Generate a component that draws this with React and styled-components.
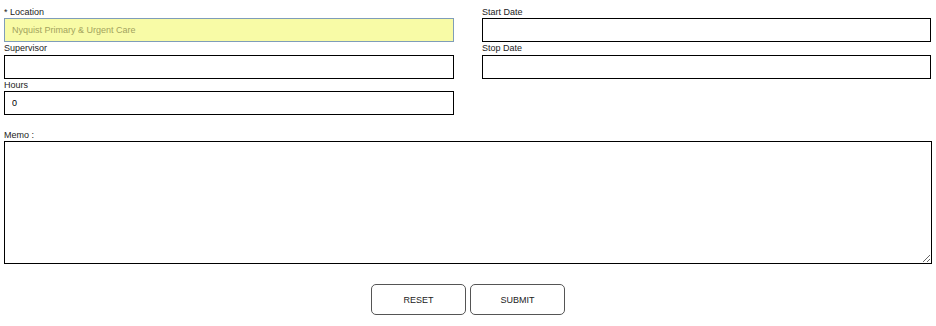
import React from 'react';
import styled, { createGlobalStyle } from 'styled-components';

const GlobalStyle = createGlobalStyle`
  body {
    margin: 0;
    font-family: "Liberation Sans", Arial, sans-serif;
    font-size: 9px;
    color: #222;
    background: #fff;
  }
`;

const Form = styled.form`
  padding: 5.5px 4px 0 4px;
  width: 928px;
`;

const Grid = styled.div`
  display: grid;
  grid-template-columns: 450px 449px;
  column-gap: 28px;
  align-items: start;
`;

const Column = styled.div`
  display: flex;
  flex-direction: column;
`;

const Label = styled.label`
  display: block;
  line-height: 12.5px;
  height: 12.5px;
  font-size: 9px;
  color: #222;
`;

const Input = styled.input`
  display: block;
  box-sizing: border-box;
  width: 100%;
  height: 24px;
  margin: 0;
  padding: 0 7px;
  border: 1px solid ${(props) => (props.$highlight ? '#7f9db9' : '#000')};
  border-radius: 0;
  background: ${(props) => (props.$highlight ? '#f8fba6' : '#fff')};
  color: ${(props) => (props.$highlight ? '#a3a35e' : '#000')};
  font-family: "Liberation Sans", Arial, sans-serif;
  font-size: 9px;
  outline: none;
`;

const MemoBlock = styled.div`
  margin-top: 13.5px;
`;

const Memo = styled.textarea`
  display: block;
  box-sizing: border-box;
  width: 928px;
  height: 123px;
  margin: 0;
  border: 1px solid #000;
  border-radius: 0;
  font-family: "Liberation Sans", Arial, sans-serif;
  font-size: 9px;
  outline: none;
`;

const Actions = styled.div`
  display: flex;
  justify-content: center;
  gap: 4px;
  margin-top: 20px;
`;

const Button = styled.button`
  box-sizing: border-box;
  width: 95px;
  height: 31px;
  margin: 0;
  background: #fff;
  border: 1px solid #555;
  border-radius: 5px;
  font-family: "Liberation Sans", Arial, sans-serif;
  font-size: 9px;
  color: #222;
  cursor: pointer;
`;

const Field = ({ label, value, highlight }) => (
  <div>
    <Label>{label}</Label>
    <Input defaultValue={value} $highlight={highlight} />
  </div>
);

const App = () => (
  <>
    <GlobalStyle />
    <Form onSubmit={(e) => e.preventDefault()}>
      <Grid>
        <Column>
          <Field label="* Location" value="Nyquist Primary & Urgent Care" highlight />
          <Field label="Supervisor" value="" />
          <Field label="Hours" value="0" />
        </Column>
        <Column>
          <Field label="Start Date" value="" />
          <Field label="Stop Date" value="" />
        </Column>
      </Grid>
      <MemoBlock>
        <Label>Memo :</Label>
        <Memo />
      </MemoBlock>
      <Actions>
        <Button type="reset">RESET</Button>
        <Button type="submit">SUBMIT</Button>
      </Actions>
    </Form>
  </>
);

export default App;
